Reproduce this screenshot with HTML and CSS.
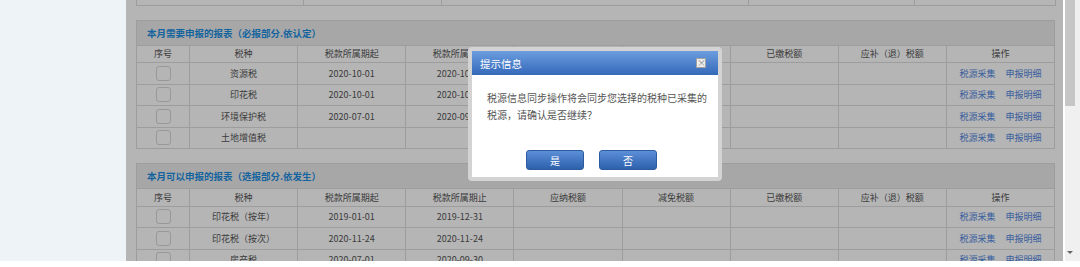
FILE: index.html
```html
<!DOCTYPE html>
<html lang="zh-CN">
<head>
    <meta charset="UTF-8">
    <meta name="viewport" content="width=device-width, initial-scale=1.0">
    <title>税源信息同步</title>
    <link rel="stylesheet" href="styles.css">
</head>
<body>
    <div class="frame">
        <div class="sidebar"></div>
        <div class="main">
            <div class="content">
                <table class="grid prev">
                    <colgroup>
                        <col style="width:167px"><col style="width:138px"><col style="width:307px"><col style="width:166px"><col style="width:141px">
                    </colgroup>
                    <tr><td></td><td></td><td></td><td></td><td></td></tr>
                </table>

                <div class="section">
                    <div class="section-title">本月需要申报的报表（必报部分.依认定）</div>
                    <table class="grid">
                        <colgroup>
                            <col class="c-no"><col><col><col><col><col><col><col><col>
                        </colgroup>
                        <thead>
                            <tr>
                                <th>序号</th><th>税种</th><th>税款所属期起</th><th>税款所属期止</th><th>应纳税额</th><th>减免税额</th><th>已缴税额</th><th>应补（退）税额</th><th>操作</th>
                            </tr>
                        </thead>
                        <tbody>
                            <tr>
                                <td><span class="check"></span></td><td>资源税</td><td>2020-10-01</td><td>2020-10-31</td><td></td><td></td><td></td><td></td>
                                <td class="ops"><a href="#">税源采集</a><a href="#">申报明细</a></td>
                            </tr>
                            <tr>
                                <td><span class="check"></span></td><td>印花税</td><td>2020-10-01</td><td>2020-10-31</td><td></td><td></td><td></td><td></td>
                                <td class="ops"><a href="#">税源采集</a><a href="#">申报明细</a></td>
                            </tr>
                            <tr>
                                <td><span class="check"></span></td><td>环境保护税</td><td>2020-07-01</td><td>2020-09-30</td><td></td><td></td><td></td><td></td>
                                <td class="ops"><a href="#">税源采集</a><a href="#">申报明细</a></td>
                            </tr>
                            <tr>
                                <td><span class="check"></span></td><td>土地增值税</td><td></td><td></td><td></td><td></td><td></td><td></td>
                                <td class="ops"><a href="#">税源采集</a><a href="#">申报明细</a></td>
                            </tr>
                        </tbody>
                    </table>
                </div>

                <div class="section">
                    <div class="section-title">本月可以申报的报表（选报部分.依发生）</div>
                    <table class="grid">
                        <colgroup>
                            <col class="c-no"><col><col><col><col><col><col><col><col>
                        </colgroup>
                        <thead>
                            <tr>
                                <th>序号</th><th>税种</th><th>税款所属期起</th><th>税款所属期止</th><th>应纳税额</th><th>减免税额</th><th>已缴税额</th><th>应补（退）税额</th><th>操作</th>
                            </tr>
                        </thead>
                        <tbody>
                            <tr>
                                <td><span class="check"></span></td><td>印花税（按年）</td><td>2019-01-01</td><td>2019-12-31</td><td></td><td></td><td></td><td></td>
                                <td class="ops"><a href="#">税源采集</a><a href="#">申报明细</a></td>
                            </tr>
                            <tr>
                                <td><span class="check"></span></td><td>印花税（按次）</td><td>2020-11-24</td><td>2020-11-24</td><td></td><td></td><td></td><td></td>
                                <td class="ops"><a href="#">税源采集</a><a href="#">申报明细</a></td>
                            </tr>
                            <tr>
                                <td><span class="check"></span></td><td>房产税</td><td>2020-07-01</td><td>2020-09-30</td><td></td><td></td><td></td><td></td>
                                <td class="ops"><a href="#">税源采集</a><a href="#">申报明细</a></td>
                            </tr>
                        </tbody>
                    </table>
                </div>
            </div>

            <div class="mask"></div>

            <div class="dialog">
                <div class="dialog-head">
                    <span>提示信息</span>
                    <span class="dialog-close">×</span>
                </div>
                <div class="dialog-body">
                    <p class="dialog-text">税源信息同步操作将会同步您选择的税种已采集的税源，请确认是否继续？</p>
                    <div class="dialog-buttons">
                        <button type="button" class="btn">是</button>
                        <button type="button" class="btn">否</button>
                    </div>
                </div>
            </div>
        </div>
        <div class="scrollbar">
            <div class="thumb"></div>
            <div class="arrow-down"></div>
        </div>
    </div>
</body>
</html>
```

FILE: styles.css
```css
* {
    box-sizing: border-box;
}
body {
    margin: 0;
    background: #fff;
    font-family: "Noto Sans CJK SC", "Liberation Sans", sans-serif;
}
.frame {
    display: flex;
    height: 261px;
}
.sidebar {
    width: 126px;
    background: #eef3f7;
}
.main {
    flex: 1;
    position: relative;
    overflow: hidden;
    background: #fff;
}
.content {
    padding: 0 8px 0 10px;
}
.grid {
    width: 919px;
    border-collapse: collapse;
    table-layout: fixed;
}
.grid .c-no {
    width: 53px;
}
.grid th, .grid td {
    border: 1px solid #dedede;
    padding: 0;
    font-size: 9px;
    font-weight: normal;
    color: #555;
    text-align: center;
    white-space: nowrap;
}
.grid th {
    height: 17.5px;
}
.grid td {
    height: 21.5px;
}
.prev td {
    height: 5px;
    border-top: none;
}
.section {
    margin-top: 14px;
}
.section-title {
    width: 919px;
    height: 25px;
    padding-left: 10px;
    border: 1px solid #dedede;
    border-bottom: none;
    background: #ececec;
    color: #1b8ce0;
    font-size: 9.5px;
    font-weight: bold;
    line-height: 24px;
}
.check {
    display: inline-block;
    width: 15px;
    height: 15px;
    border: 1px solid #d6d6d6;
    border-radius: 3px;
    background: #fff;
    vertical-align: middle;
}
.ops a {
    margin: 0 5px;
    color: #4f86e0;
    text-decoration: none;
}
.mask {
    position: absolute;
    top: 0;
    left: 0;
    right: 0;
    bottom: 0;
    background: rgba(0, 0, 0, 0.29);
}
.dialog {
    position: absolute;
    left: 342px;
    top: 47px;
    width: 254px;
    padding: 4px;
    border-radius: 4px;
    background: #d3d3d3;
}
.dialog-head {
    display: flex;
    align-items: center;
    justify-content: space-between;
    height: 24px;
    padding: 0 12px 0 8px;
    background: linear-gradient(#6c9de0, #3469b9);
    color: #fff;
    font-size: 10.5px;
}
.dialog-close {
    width: 10px;
    height: 10px;
    border: 1px solid #a0a0a0;
    background: #eee;
    color: #888;
    font-size: 9px;
    line-height: 7px;
    text-align: center;
}
.dialog-body {
    height: 102px;
    padding: 14px 8px 0 15px;
    background: #fff;
}
.dialog-text {
    margin: 0;
    color: #555;
    font-size: 10px;
    line-height: 17px;
}
.dialog-buttons {
    display: flex;
    justify-content: center;
    gap: 15px;
    margin-top: 27px;
    padding-right: 14px;
}
.btn {
    width: 58px;
    height: 20px;
    padding: 0;
    border: 1px solid #2c5b9e;
    border-radius: 3px;
    background: linear-gradient(#5b8fd7, #2e61ad);
    color: #fff;
    font-family: inherit;
    font-size: 10px;
}
.scrollbar {
    display: flex;
    flex-direction: column;
    justify-content: space-between;
    width: 17px;
    border-left: 2px solid #fff;
    background: #f0f0f0;
}
.thumb {
    width: 10px;
    height: 106px;
    background: #c6c6c6;
}
.arrow-down {
    width: 0;
    height: 0;
    margin: 0 0 7px 2px;
    border-left: 3px solid transparent;
    border-right: 3px solid transparent;
    border-top: 3px solid #666;
}
```
